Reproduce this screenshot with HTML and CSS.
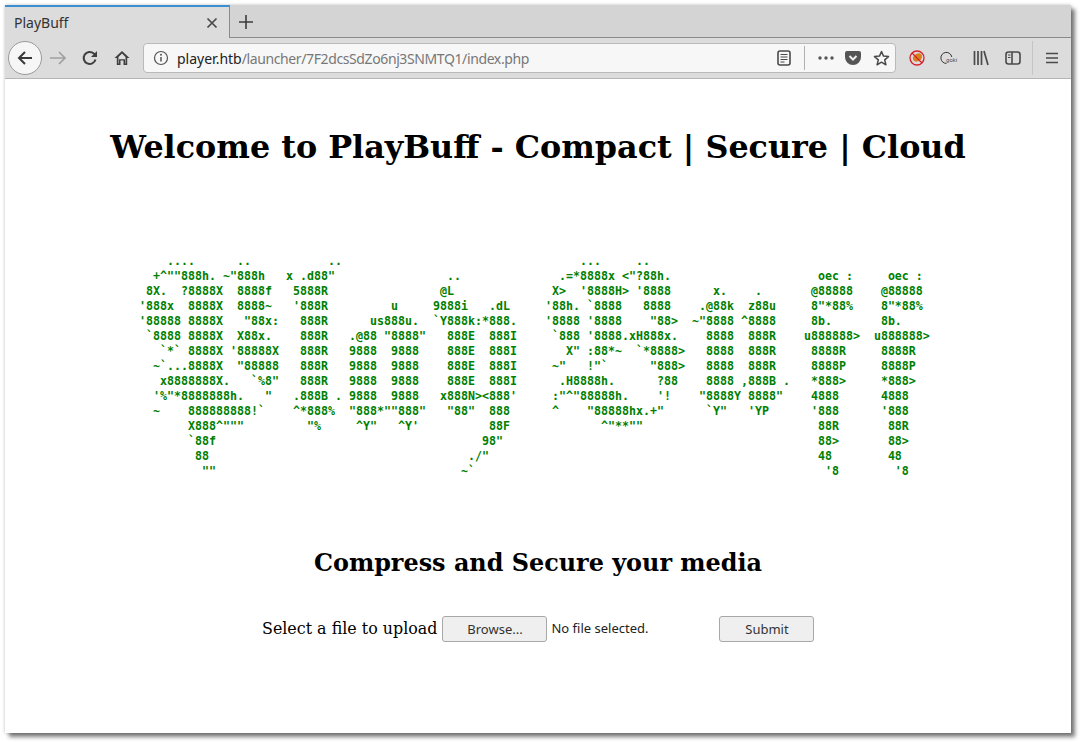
FILE: index.html
```html
<!DOCTYPE html>
<html lang="en">
<head>
    <meta charset="UTF-8">
    <title>PlayBuff</title>
    <link rel="stylesheet" href="styles.css">
</head>
<body>
    <div class="window">
        <!-- Tab strip -->
        <div class="tabbar">
            <div class="tab">
                <span class="tab-title">PlayBuff</span>
                <svg class="tab-close" width="12" height="12" viewBox="0 0 12 12"><path d="M1.5 1.5l9 9M10.5 1.5l-9 9" stroke="#4a4a4a" stroke-width="1.7" fill="none"/></svg>
            </div>
            <div class="newtab">
                <svg width="16" height="16" viewBox="0 0 16 16"><path d="M8 1v14M1 8h14" stroke="#3c3c3c" stroke-width="1.6" fill="none"/></svg>
            </div>
        </div>

        <!-- Nav toolbar -->
        <div class="navbar">
            <div class="backbtn">
                <svg width="18" height="18" viewBox="0 0 18 18"><path d="M16 9H3M9 3L3 9l6 6" stroke="#3a3a3a" stroke-width="2" fill="none"/></svg>
            </div>
            <div class="navbtn">
                <svg width="18" height="18" viewBox="0 0 18 18"><path d="M1 9h15M10 3l6 6-6 6" stroke="#a0a0a0" stroke-width="1.7" fill="none"/></svg>
            </div>
            <div class="navbtn">
                <svg width="16" height="16" viewBox="0 0 16 16"><path d="M13.5 9.5A6 6 0 1 1 11.8 3.6L14 5.5" stroke="#3f3f3f" stroke-width="2" fill="none"/><path d="M15 1v6H9z" fill="#3f3f3f"/></svg>
            </div>
            <div class="navbtn">
                <svg width="16" height="16" viewBox="0 0 16 16"><path d="M8 1L0.5 8h2.3v7h3.7v-4.5h3V15h3.7V8h2.3z" fill="#3f3f3f"/><path d="M8 3.5L4.5 7v6.5h.5V9.2h6v4.3h.5V7z" fill="#e0e0e0"/></svg>
            </div>
            <div class="urlbar">
                <svg class="info-icon" width="16" height="16" viewBox="0 0 16 16"><circle cx="8" cy="8" r="6.5" stroke="#555" stroke-width="1.2" fill="none"/><path d="M8 7v4.5" stroke="#555" stroke-width="1.5"/><circle cx="8" cy="4.8" r="1" fill="#555"/></svg>
                <span class="url"><span class="url-host">player.htb</span><span class="url-path">/launcher/7F2dcsSdZo6nj3SNMTQ1/index.php</span></span>
                <svg class="url-icon" width="16" height="16" viewBox="0 0 16 16"><rect x="2" y="1" width="12" height="14" rx="2" stroke="#4a4a4a" stroke-width="1.6" fill="none"/><path d="M4.5 4.5h7M4.5 7h7M4.5 9.5h7M4.5 12h4" stroke="#4a4a4a" stroke-width="1.2"/></svg>
                <span class="url-sep"></span>
                <svg class="url-icon dots" width="16" height="16" viewBox="0 0 16 16"><circle cx="2" cy="8" r="1.7" fill="#555"/><circle cx="8" cy="8" r="1.7" fill="#555"/><circle cx="14" cy="8" r="1.7" fill="#555"/></svg>
                <svg class="url-icon" width="16" height="16" viewBox="0 0 16 16"><path d="M2 1h12a2 2 0 0 1 2 2v4a8 8 0 0 1-16 0V3a2 2 0 0 1 2-2z" fill="#555"/><path d="M4.5 6L8 9.5 11.5 6" stroke="#eee" stroke-width="2" fill="none"/></svg>
                <svg class="url-icon" width="17" height="16" viewBox="0 0 17 16"><path d="M8.5 1.5l2 4.6 5 .5-3.8 3.3 1.2 4.900-4.400-2.600-4.400 2.600 1.200-4.900L1.500 6.600l5-.5z" stroke="#4a4a4a" stroke-width="1.5" fill="none" stroke-linejoin="round"/></svg>
            </div>
            <div class="navbtn">
                <svg width="16" height="16" viewBox="0 0 16 16"><ellipse cx="8.5" cy="7.5" rx="5" ry="3.8" transform="rotate(-35 8.5 7.5)" fill="#d9801e"/><circle cx="8" cy="8" r="7" stroke="#d8202a" stroke-width="1.3" fill="none"/><path d="M3 3l10 10" stroke="#d8202a" stroke-width="1.3"/></svg>
            </div>
            <div class="navbtn">
                <svg width="18" height="14" viewBox="0 0 18 14"><path d="M6.5 12.4A5.5 5.5 0 1 1 11.8 6" stroke="#333" stroke-width="1" fill="none"/><text class="goki" x="6" y="11">goki</text></svg>
            </div>
            <div class="navbtn">
                <svg width="16" height="16" viewBox="0 0 16 16"><path d="M1.5 1v14M5 1v14M8.5 1v14M11 1l4 14" stroke="#4a4a4a" stroke-width="1.7" fill="none"/></svg>
            </div>
            <div class="navbtn">
                <svg width="16" height="14" viewBox="0 0 16 14"><rect x="1" y="1" width="14" height="12" rx="2.5" stroke="#4a4a4a" stroke-width="1.6" fill="none"/><path d="M7 1v12" stroke="#4a4a4a" stroke-width="1.6"/><path d="M3 4h2.5M3 6.5h2.5" stroke="#4a4a4a" stroke-width="1"/></svg>
            </div>
            <span class="nav-sep"></span>
            <div class="navbtn">
                <svg width="14" height="12" viewBox="0 0 14 12"><path d="M1 1.5h12M1 6h12M1 10.5h12" stroke="#4a4a4a" stroke-width="1.7" fill="none"/></svg>
            </div>
        </div>

        <!-- Page content -->
        <div class="page">
            <h1>Welcome to PlayBuff - Compact | Secure | Cloud</h1>
<pre class="logo">    ....      ..           ..                                  ...     ..
  +^""888h. ~"888h   x .d88"                ..              .=*8888x &lt;"?88h.                     oec :     oec :
 8X.  ?8888X  8888f   5888R                @L              X>  '8888H> '8888      x.    .       @88888    @88888
'888x  8888X  8888~   '888R         u     9888i   .dL     '88h. `8888   8888    .@88k  z88u     8"*88%    8"*88%
'88888 8888X   "88x:   888R      us888u.  `Y888k:*888.    '8888 '8888    "88>  ~"8888 ^8888     8b.       8b.
 `8888 8888X  X88x.    888R   .@88 "8888"   888E  888I     `888 '8888.xH888x.    8888  888R    u888888>  u888888>
   `*` 8888X '88888X   888R   9888  9888    888E  888I       X" :88*~  `*8888>   8888  888R     8888R     8888R
  ~`...8888X  "88888   888R   9888  9888    888E  888I     ~"   !"`      "888>   8888  888R     8888P     8888P
   x8888888X.   `%8"   888R   9888  9888    888E  888I      .H8888h.      ?88    8888 ,888B .   *888>     *888>
  '%"*8888888h.   "   .888B . 9888  9888   x888N>&lt;888'     :"^"88888h.    '!    "8888Y 8888"    4888      4888
  ~    888888888!`    ^*888%  "888*""888"   "88"  888      ^    "88888hx.+"      `Y"   'YP      '888      '888
       X888^"""         "%     ^Y"   ^Y'          88F             ^"**""                         88R       88R
       `88f                                      98"                                             88>       88>
        88                                     ./"                                               48        48
         ""                                   ~`                                                  '8        '8</pre>
            <h2>Compress and Secure your media</h2>
            <form class="upload-form">
                <span class="upload-label">Select a file to upload</span>
                <button type="button" class="btn browse-btn">Browse...</button>
                <span class="file-name">No file selected.</span>
                <button type="button" class="btn submit-btn">Submit</button>
            </form>
        </div>
    </div>
</body>
</html>
```

FILE: styles.css
```css
body {
    margin: 0;
    padding: 5px 9px 9px 5px;
    background-color: white;
    font-family: "Noto Sans", sans-serif;
}
.window {
    width: 1066px;
    height: 728px;
    background-color: white;
    box-shadow: 4px 4px 4px rgba(0, 0, 0, 0.5), 0 0 3px rgba(0, 0, 0, 0.25);
    overflow: hidden;
}
.tabbar {
    display: flex;
    height: 33px;
    background-color: #d4d4d4;
    border-bottom: 1px solid #8a8a8a;
    box-sizing: border-box;
}
.tab {
    display: flex;
    align-items: center;
    justify-content: space-between;
    box-sizing: border-box;
    width: 225px;
    height: 33px;
    padding: 0 11px 0 9px;
    background-color: #dcdcdc;
    border-top: 2px solid #3b8ed0;
    border-right: 1px solid #8a8a8a;
    font-size: 14px;
    color: #333;
}
.newtab {
    display: flex;
    align-items: center;
    justify-content: center;
    width: 32px;
    margin-top: 1px;
}
.navbar {
    display: flex;
    align-items: center;
    height: 41px;
    box-sizing: border-box;
    background-color: #dcdcdc;
    border-bottom: 1px solid #b5b5b5;
    padding: 0 3px;
}
.backbtn {
    display: flex;
    align-items: center;
    justify-content: center;
    box-sizing: border-box;
    width: 34px;
    height: 34px;
    background-color: #f6f6f6;
    border: 1px solid #9a9a9a;
    border-radius: 50%;
}
.navbtn {
    display: flex;
    align-items: center;
    justify-content: center;
    width: 32px;
    flex-shrink: 0;
}
.urlbar {
    display: flex;
    align-items: center;
    flex: 1;
    box-sizing: border-box;
    height: 30px;
    margin: 0 5px;
    padding: 0 5px 0 9px;
    background-color: #f7f7f7;
    border: 1px solid #b9b9b9;
    border-radius: 4px;
}
.url {
    flex: 1;
    margin-left: 8px;
    font-size: 14px;
}
.url-host {
    color: #222;
}
.url-path {
    color: #777;
    letter-spacing: -0.39px;
}
.url-icon {
    flex-shrink: 0;
}
.url-sep {
    width: 1px;
    height: 24px;
    margin: 0 13px 0 12px;
    background-color: #b0b0b0;
}
.dots {
    margin-right: 11px;
}
.url-icon + .url-icon {
    margin-right: 12px;
}
.url-icon:last-child {
    margin-right: 0;
}
.goki {
    font-size: 5.5px;
    fill: #444;
}
.nav-sep {
    width: 1px;
    height: 34px;
    margin: 0 3px;
    background-color: #c4c4c4;
}
.page {
    text-align: center;
}
h1 {
    margin: 48px 0 0;
    font-family: "DejaVu Serif", serif;
    font-size: 31.8px;
    line-height: 40px;
    color: #000;
}
.logo {
    margin: 87px 0 0 134px;
    text-align: left;
    font-family: "DejaVu Sans Mono", monospace;
    font-weight: bold;
    font-size: 11.63px;
    line-height: 15px;
    color: green;
}
h2 {
    margin: 69px 0 0;
    font-family: "DejaVu Serif", serif;
    font-size: 23.9px;
    line-height: 30px;
    color: #000;
}
.upload-form {
    display: flex;
    align-items: center;
    margin: 36px 0 0 257px;
}
.upload-label {
    font-family: "DejaVu Serif", serif;
    font-size: 15.9px;
    color: #000;
}
.btn {
    box-sizing: border-box;
    height: 26px;
    margin-top: 2px;
    padding: 0;
    background-color: #efefef;
    border: 1px solid #a8a8a8;
    border-radius: 3px;
    font-family: "Noto Sans", sans-serif;
    font-size: 13px;
    color: #333;
}
.browse-btn {
    width: 105px;
    margin-left: 5px;
}
.file-name {
    width: 168px;
    margin-left: 4px;
    text-align: left;
    font-size: 13px;
    color: #222;
}
.submit-btn {
    width: 95px;
}
```
